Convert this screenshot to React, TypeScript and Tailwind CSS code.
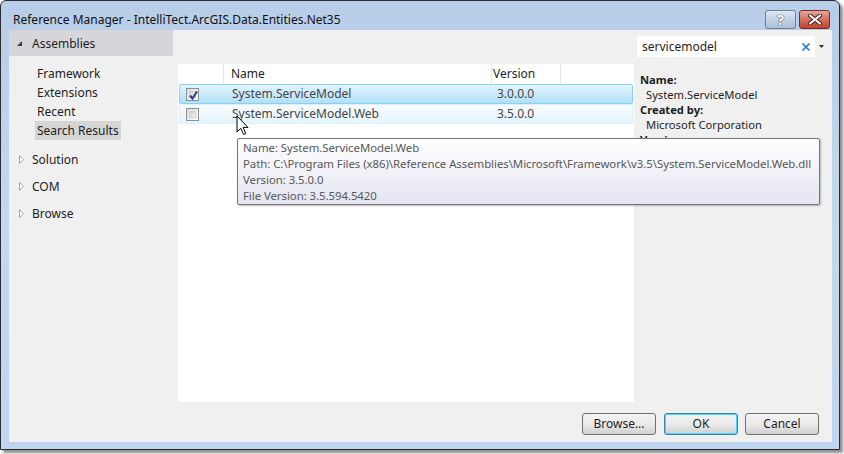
import React from "react";

const font = "font-['Segoe_UI','Noto_Sans',sans-serif]";

const Checkbox = ({ checked }: { checked?: boolean }) => (
  <div className="w-[13px] h-[13px] border border-[#8e8f8f] bg-gradient-to-br from-[#dcdcdc] to-[#fbfbfb] p-[2px]">
    <div className="w-full h-full border border-[#d0d0d0] bg-gradient-to-br from-[#cbcfd5] to-[#f6f6f6] relative">
      {checked && (
        <svg width="11" height="11" viewBox="0 0 11 11" className="absolute left-[-2px] top-[-2px]">
          <path d="M2 5.5 L4.5 8.5 L9 1.5" stroke="#2b3a8f" strokeWidth="2" fill="none" />
        </svg>
      )}
    </div>
  </div>
);

const Expanded = () => (
  <svg width="5" height="5" viewBox="0 0 5 5">
    <polygon points="5,0 5,5 0,5" fill="#3d3d3d" />
  </svg>
);

const Collapsed = () => (
  <svg width="5" height="9" viewBox="0 0 5 9">
    <polygon points="0.5,0.5 4.5,4.5 0.5,8.5" fill="#ffffff" stroke="#a6a6a6" strokeWidth="1" />
  </svg>
);

const Button = ({ label, focused }: { label: string; focused?: boolean }) => (
  <div
    className={`w-[74px] h-[22px] rounded-[3px] border ${
      focused ? "border-[#3c7fb1] shadow-[inset_0_0_0_1px_#48d8f8]" : "border-[#707070]"
    } bg-gradient-to-b from-[#f2f2f2] via-[#ebebeb] to-[#d0d0d0] flex items-center justify-center text-[12px] text-[#1e1e1e]`}
  >
    {label}
  </div>
);

export default function App() {
  return (
    <div className={`relative w-[844px] h-[454px] bg-white overflow-hidden ${font}`}>
      <div className="w-[840px] h-[450px] border border-[#2c2c2c] rounded-t-[6px] bg-gradient-to-b from-[#b7cde8] via-[#c3d7f0] to-[#bfd4ef] flex flex-col shadow-[3px_3px_3px_rgba(0,0,0,0.45)]">
        {/* Title bar */}
        <div className="h-[29px] flex items-start pl-[12px] pr-[9px]">
          <div className="pt-[10px] leading-[18px] text-[12px] text-[#111]">
            Reference Manager - IntelliTect.ArcGIS.Data.Entities.Net35
          </div>
          <div className="ml-auto pt-[9px] flex gap-[3px]">
            <div className="w-[31px] h-[19px] rounded-[3px] border border-[#6d7d93] bg-gradient-to-b from-[#dfe8f3] via-[#c2d2e6] to-[#aebfd8] flex items-center justify-center">
              <span className="text-[15px] font-bold leading-none text-white [text-shadow:0_0_1px_#333,0_0_1px_#333]">?</span>
            </div>
            <div className="w-[31px] h-[19px] rounded-[3px] border border-[#7a2c24] bg-gradient-to-b from-[#e5a79a] via-[#d4705f] to-[#c3402c] flex items-center justify-center">
              <svg width="14" height="11" viewBox="0 0 14 11">
                <path d="M2 1.5 L12 9.5 M12 1.5 L2 9.5" stroke="#3a1a16" strokeWidth="4" strokeLinecap="round" />
                <path d="M2 1.5 L12 9.5 M12 1.5 L2 9.5" stroke="#ffffff" strokeWidth="2.2" strokeLinecap="round" />
              </svg>
            </div>
          </div>
        </div>

        {/* Content */}
        <div className="flex-1 ml-[8px] mr-[7px] mb-[7px] bg-[#f0f0f0] flex flex-col text-[12px] text-[#1e1e1e]">
          <div className="h-[372px] flex">
            {/* Left navigation */}
            <div className="w-[164px] flex flex-col">
              <div className="h-[26px] bg-[#d6d5d9] flex items-center">
                <div className="ml-[8px] mt-[1px] w-[5px] flex">
                  <Expanded />
                </div>
                <span className="ml-[10px] mt-[1px]">Assemblies</span>
              </div>
              <div className="pt-[8px] pl-[26px] flex flex-col items-start">
                {["Framework", "Extensions", "Recent", "Search Results"].map((t) => (
                  <div
                    key={t}
                    className={`h-[19px] leading-[19px] px-[2px] ${t === "Search Results" ? "bg-[#d5d5d5]" : ""}`}
                  >
                    {t}
                  </div>
                ))}
              </div>
              <div className="mt-[6px] flex flex-col">
                {["Solution", "COM", "Browse"].map((t) => (
                  <div key={t} className="h-[27px] flex items-center pl-[10px]">
                    <div className="w-[5px] flex">
                      <Collapsed />
                    </div>
                    <span className="ml-[8px]">{t}</span>
                  </div>
                ))}
              </div>
            </div>

            {/* Center list */}
            <div className="ml-[5px] w-[456px] pt-[34px]">
              <div className="h-[338px] bg-white flex flex-col">
                <div className="h-[20px] flex items-stretch text-[#1e1e1e]">
                  <div className="w-[46px] border-r border-[#e5e5e5]" />
                  <div className="w-[268px] border-r border-[#e5e5e5] pl-[7px] leading-[19px]">Name</div>
                  <div className="w-[69px] border-r border-[#e5e5e5] pl-[1px] leading-[19px]">Version</div>
                </div>
                <div className="mx-[1px] h-[20px] rounded-[2px] border border-[#8ad0f5] bg-gradient-to-b from-[#e3f4fd] to-[#b1e0f8] flex items-center text-[#454545]">
                  <div className="w-[44px] pl-[6px]">
                    <Checkbox checked />
                  </div>
                  <div className="w-[268px] pl-[8px]">System.ServiceModel</div>
                  <div className="pl-[5px]">3.0.0.0</div>
                </div>
                <div className="mx-[1px] h-[20px] rounded-[2px] border border-[#dcf0fb] bg-gradient-to-b from-[#f7fcfe] to-[#e3f4fd] flex items-center text-[#454545]">
                  <div className="w-[44px] pl-[6px]">
                    <Checkbox />
                  </div>
                  <div className="w-[268px] pl-[8px]">System.ServiceModel.Web</div>
                  <div className="pl-[5px]">3.5.0.0</div>
                </div>
              </div>
            </div>

            {/* Right detail pane */}
            <div className="ml-[3px] w-[190px] pt-[6px] flex flex-col">
              <div className="h-[21px] flex">
                <div className="w-[178px] bg-white flex items-center pl-[5px] pr-[4px]">
                  <span className="text-[#1e1e1e]">servicemodel</span>
                  <svg className="ml-auto" width="10" height="10" viewBox="0 0 10 10">
                    <path d="M1.5 1.5 L8.5 8.5 M8.5 1.5 L1.5 8.5" stroke="#1f74d6" strokeWidth="1.6" />
                  </svg>
                </div>
                <div className="w-[12px] flex items-center justify-center">
                  <svg width="5" height="3" viewBox="0 0 5 3">
                    <polygon points="0,0 5,0 2.5,3" fill="#2b2b2b" />
                  </svg>
                </div>
              </div>
              <div className="mt-[15px] pl-[3px] text-[11.2px] leading-[15px]">
                <div className="font-bold">Name:</div>
                <div className="pl-[6px]">System.ServiceModel</div>
                <div className="font-bold">Created by:</div>
                <div className="pl-[6px]">Microsoft Corporation</div>
                <div className="font-bold">Version:</div>
              </div>
            </div>
          </div>

          {/* Buttons */}
          <div className="flex-1 flex justify-end items-start pt-[11px] pr-[13px]">
            <Button label="Browse..." />
            <div className="ml-[8px]">
              <Button label="OK" focused />
            </div>
            <div className="ml-[7px]">
              <Button label="Cancel" />
            </div>
          </div>
        </div>
      </div>

      {/* Tooltip */}
      <div className="absolute left-[237px] top-[138px] w-[583px] h-[67px] rounded-[2px] border border-[#767676] bg-gradient-to-b from-white to-[#e4e5f0] pl-[5px] pt-[1px] text-[11.4px] tracking-[-0.05px] leading-[16px] text-[#575757] whitespace-nowrap shadow-[1px_1px_2px_rgba(0,0,0,0.25)]">
        <div>Name: System.ServiceModel.Web</div>
        <div>Path: C:\Program Files (x86)\Reference Assemblies\Microsoft\Framework\v3.5\System.ServiceModel.Web.dll</div>
        <div>Version: 3.5.0.0</div>
        <div>File Version: 3.5.594.5420</div>
      </div>

      {/* Mouse cursor */}
      <svg className="absolute left-[236px] top-[115px]" width="13" height="21" viewBox="0 0 13 21">
        <path d="M1 1 L1 17 L4.8 13.3 L7.6 19.5 L9.8 18.5 L7.1 12.4 L12 12.4 Z" fill="#ffffff" stroke="#000000" strokeWidth="1" strokeLinejoin="miter" />
      </svg>
    </div>
  );
}
